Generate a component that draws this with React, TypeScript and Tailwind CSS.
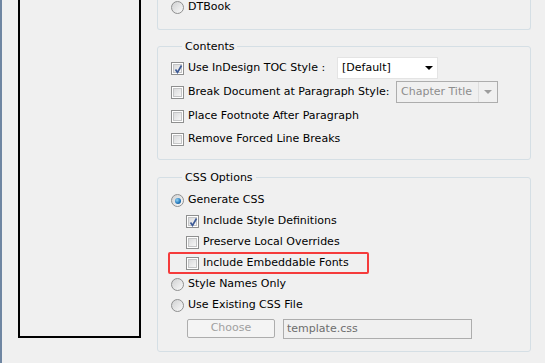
import React from 'react'

const Checkbox = ({ checked = false }: { checked?: boolean }) => (
  <div className="w-[13px] h-[13px] shrink-0 border border-[#8e8f8f] bg-white p-[1px]">
    <div className="relative w-full h-full border border-[#c4c5c6] bg-gradient-to-br from-[#dadbdc] to-[#f6f6f6]">
      {checked && (
        <svg className="absolute -left-[1px] -top-[1px]" width="11" height="11" viewBox="0 0 11 11">
          <path d="M2.5 5.5 L4.5 8.5 L8.5 1.5" fill="none" stroke="#3d5a96" strokeWidth="1.7" />
        </svg>
      )}
    </div>
  </div>
)

const Radio = ({ checked = false }: { checked?: boolean }) => (
  <div className="w-[13px] h-[13px] shrink-0 rounded-full border border-[#8e8f8f] bg-gradient-to-br from-[#d0d1d2] to-[#fafafa] flex items-center justify-center">
    {checked && (
      <div className="w-[6px] h-[6px] rounded-full bg-[radial-gradient(circle_at_35%_35%,#8fd3f5,#1f73b8_60%,#14507f)]" />
    )}
  </div>
)

const Row = ({ children, h = 'h-[21px]' }: { children: React.ReactNode; h?: string }) => (
  <div className={`flex items-center gap-[4px] ${h}`}>{children}</div>
)

export default function App() {
  return (
    <div
      className="flex items-start w-[545px] h-[363px] overflow-hidden bg-[#f0f0f0] text-[11px] text-black"
      style={{ fontFamily: '"DejaVu Sans", Verdana, sans-serif' }}
    >
      <div className="w-[2px] self-stretch shrink-0 bg-[#6f86a2]" />

      {/* preview box, top cut off */}
      <div className="ml-[16px] w-[123px] h-[338px] shrink-0 border-x-2 border-b-2 border-black" />

      <div className="ml-[16px] w-[374px] shrink-0 flex flex-col">
        {/* export format group (top cut off) */}
        <div className="h-[30px] border-x border-b border-[#d5dfe5] rounded-b-[3px] pl-[13px]">
          <Row h="h-[14px]">
            <Radio />
            <span>DTBook</span>
          </Row>
        </div>

        <fieldset className="mt-[9px] border border-[#d5dfe5] rounded-[3px] pl-[13px] pt-[2px] pb-[9px]">
          <legend className="ml-[11px] px-[3px] leading-[15px]">Contents</legend>
          <Row h="h-[24px]">
            <Checkbox checked />
            <span className="w-[145px]">Use InDesign TOC Style :</span>
            <div className="w-[101px] h-[22px] bg-white border border-[#e4e4e4] flex items-center pl-[4px] pr-[4px]">
              <span className="flex-1">[Default]</span>
              <svg width="8" height="4" viewBox="0 0 8 4">
                <path d="M0 0 H8 L4 4 Z" fill="#000" />
              </svg>
            </div>
          </Row>
          <Row h="h-[24px]">
            <Checkbox />
            <span className="w-[204px]">Break Document at Paragraph Style:</span>
            <div className="w-[102px] h-[22px] border border-[#adadad] flex items-center">
              <span className="flex-1 pl-[4px] text-[#8d8d8d]">Chapter Title</span>
              <div className="w-[19px] h-full border-l border-[#dedede] flex items-center justify-center">
                <svg width="8" height="4" viewBox="0 0 8 4">
                  <path d="M0 0 H8 L4 4 Z" fill="#9d9d9d" />
                </svg>
              </div>
            </div>
          </Row>
          <Row h="h-[24px]">
            <Checkbox />
            <span>Place Footnote After Paragraph</span>
          </Row>
          <Row h="h-[22px]">
            <Checkbox />
            <span>Remove Forced Line Breaks</span>
          </Row>
        </fieldset>

        <fieldset className="mt-[10px] border border-[#d5dfe5] rounded-[3px] pl-[13px] pt-[5px] pb-[12px]">
          <legend className="ml-[11px] px-[3px] leading-[15px]">CSS Options</legend>
          <Row>
            <Radio checked />
            <span>Generate CSS</span>
          </Row>
          <div className="pl-[15px]">
            <Row>
              <Checkbox checked />
              <span>Include Style Definitions</span>
            </Row>
            <Row>
              <Checkbox />
              <span>Preserve Local Overrides</span>
            </Row>
          </div>
          <div className="relative">
            <div className="pl-[15px]">
              <Row>
                <Checkbox />
                <span>Include Embeddable Fonts</span>
              </Row>
            </div>
            <div className="absolute -left-[3px] -top-[1px] w-[201px] h-[22px] border-2 border-[#f53b3b] rounded-[2px]" />
          </div>
          <Row>
            <Radio />
            <span>Style Names Only</span>
          </Row>
          <Row>
            <Radio />
            <span>Use Existing CSS File</span>
          </Row>
          <div className="mt-[3px] pl-[16px] flex gap-[8px]">
            <div className="w-[88px] h-[19px] border border-[#adadad] rounded-[2px] bg-[#f4f4f4] flex items-center justify-center text-[#a0a0a0]">
              Choose
            </div>
            <div className="w-[189px] h-[20px] border border-[#adadad] flex items-center pl-[3px] text-[#6d6d6d]">
              template.css
            </div>
          </div>
        </fieldset>
      </div>
    </div>
  )
}
